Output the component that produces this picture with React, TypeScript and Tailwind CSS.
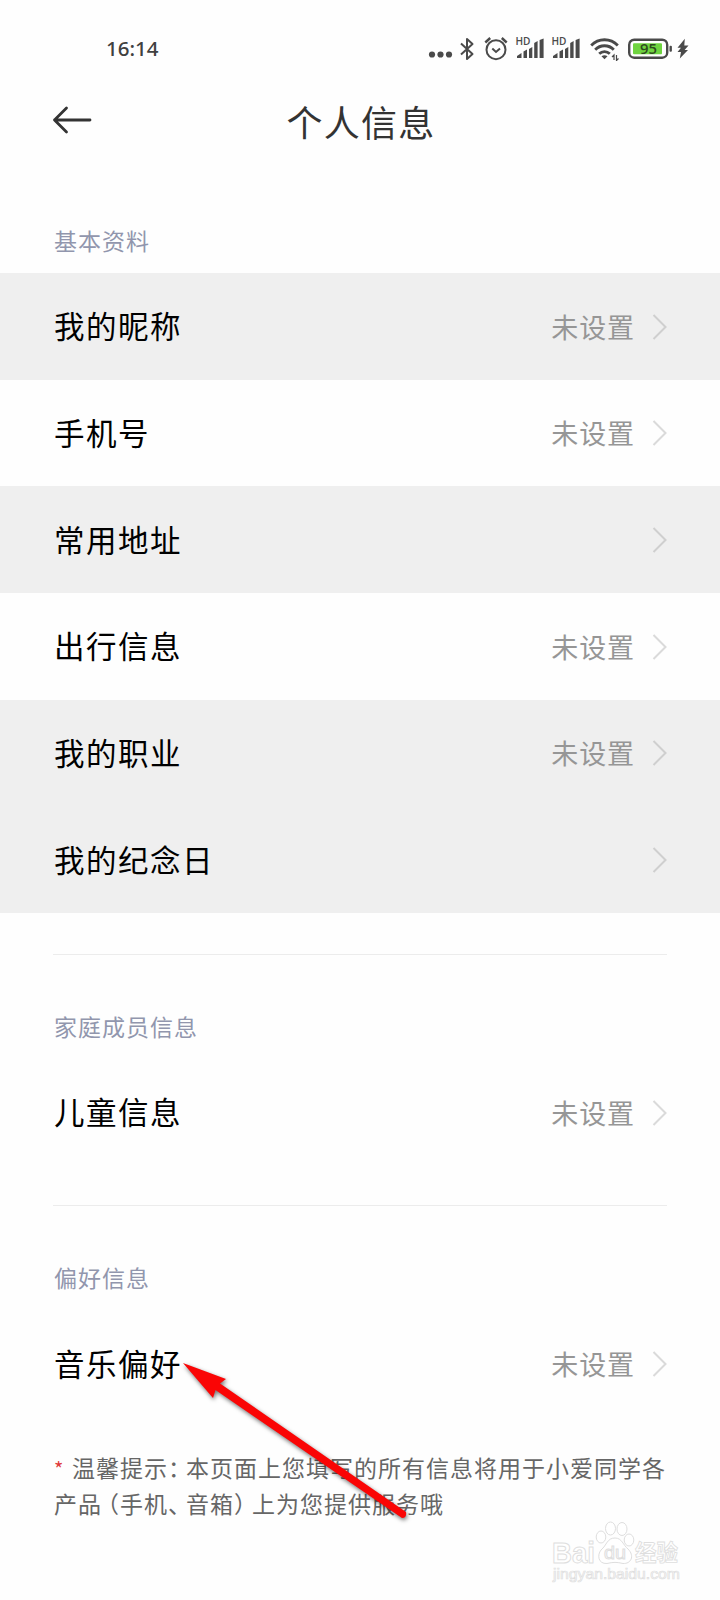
import { ReactNode } from "react";

type RowProps = { label: string; value?: string; shaded?: boolean };

const basicRows: RowProps[] = [
  { label: "我的昵称", value: "未设置", shaded: true },
  { label: "手机号", value: "未设置" },
  { label: "常用地址", shaded: true },
  { label: "出行信息", value: "未设置" },
  { label: "我的职业", value: "未设置", shaded: true },
  { label: "我的纪念日", shaded: true },
];

function Signal() {
  return (
    <svg className="overflow-visible" width="29" height="24" viewBox="0 0 29 24" fill="#4a4a4a">
      <text x="-0.5" y="8.2" fontSize="10.5" fontWeight="600" fontFamily="Open Sans, sans-serif" textLength="15" lengthAdjust="spacingAndGlyphs">
        HD
      </text>
      <path d="M1 21V19L5.500 16V21Z" />
      <path d="M7.500 14.500L11 12.500V21H7.500Z" />
      <path d="M13 12L16.300 10V21H13Z" />
      <path d="M18.200 6L21.600 4V21H18.200Z" />
      <path d="M23.600 3L27.600 1.500V21H23.600Z" />
    </svg>
  );
}

function StatusBar() {
  return (
    <div className="flex h-[97px] items-center pl-[106px] pr-[31px]">
      <span className="-mt-px font-['Noto_Sans','Open_Sans',sans-serif] text-[20.5px] font-medium leading-none text-[#404040]">
        16:14
      </span>
      <div className="ml-auto flex items-center">
        <svg width="25" height="24" viewBox="0 0 25 24" fill="#4a4a4a">
          <circle cx="4" cy="17.500" r="3.100" />
          <circle cx="12.500" cy="17.500" r="3.100" />
          <circle cx="21" cy="17.500" r="3.100" />
        </svg>
        <svg className="ml-[6px]" width="16" height="24" viewBox="0 0 16 24" fill="none" stroke="#4a4a4a" strokeWidth="2">
          <path d="M2 6.500L13.500 17L8 22V2L13.500 7L2 17.500" strokeLinejoin="round" />
        </svg>
        <svg className="ml-[9px]" width="24" height="26" viewBox="0 0 24 26" fill="none" stroke="#4a4a4a" strokeWidth="2">
          <circle cx="12" cy="13.700" r="9.500" />
          <path d="M8.300 12.500L12 16L16 12.500" />
          <path d="M1.300 6.500L6.200 2M22.700 6.500L17.800 2" strokeWidth="2.4" />
        </svg>
        <div className="ml-[8px] mr-px flex gap-[7px]">
          <Signal />
          <Signal />
        </div>
        <svg className="ml-[8px]" width="30" height="24" viewBox="0 0 30 24" fill="none" stroke="#4a4a4a" strokeWidth="2.8">
          <path d="M1.200 8.500C8.500 0.800 20.500 0.800 27.800 8.500" />
          <path d="M5.200 12.700C10.300 7.400 18.700 7.400 23.800 12.700" />
          <path d="M9.200 16.800C12.200 13.800 16.800 13.800 19.800 16.800" />
          <path d="M11.500 19.300Q14.500 17.300 17.500 19.300L14.500 22.300Z" fill="#4a4a4a" stroke="none" />
          <path d="M24 23V18L22 20M26.500 18V23.500L28.500 21.500" strokeWidth="1.2" />
        </svg>
        <svg className="ml-[8px]" width="45" height="22" viewBox="0 0 45 22">
          <rect x="1.200" y="1.700" width="38" height="18" rx="5" fill="#fff" stroke="#4a4a4a" strokeWidth="2.400" />
          <rect x="5" y="5.200" width="29" height="11" rx="1" fill="#6fd440" />
          <rect x="41.500" y="7.700" width="2.400" height="6" rx="1" fill="#4a4a4a" />
          <text x="20.500" y="15.700" textAnchor="middle" fontSize="14" fontWeight="600" fontFamily="Open Sans, sans-serif" fill="#2d4a1e" textLength="17" lengthAdjust="spacingAndGlyphs">
            95
          </text>
        </svg>
        <svg className="ml-[4px]" width="12" height="22" viewBox="0 0 12 22" fill="#4a4a4a">
          <path d="M7.800 0.800L0.500 9.800H4L0.500 14H4L2.800 20.500L11 12H7.600L11.500 7.500H7.300Z" />
        </svg>
      </div>
    </div>
  );
}

function SectionTitle({ children }: { children: ReactNode }) {
  return <h2 className="px-[54px] text-[23px] leading-8 tracking-[1px] text-[#9196ad]">{children}</h2>;
}

function Row({ label, value, shaded }: RowProps) {
  return (
    <div className={`flex h-[106.67px] items-center pl-[54px] pr-[52px] ${shaded ? "bg-[#efefef]" : ""}`}>
      <span className="text-[30.5px] tracking-[1.5px] text-black">{label}</span>
      <span className="ml-auto pt-px text-[27px] tracking-[0.9px] text-[#969696]">{value}</span>
      <svg className="ml-[17px] mt-px" width="16" height="28" viewBox="0 0 16 28" fill="none" stroke={shaded ? "#cfcfcf" : "#dadada"} strokeWidth="2">
        <path d="M1.500 2L13.500 14L1.500 26" />
      </svg>
    </div>
  );
}

// half-width punctuation
function Punct({ children, end }: { children: string; end?: boolean }) {
  return <span className={`inline-flex w-[18px] [font-feature-settings:'halt'] ${end ? "justify-end" : ""}`}>{children}</span>;
}

function PointerArrow() {
  return (
    <svg className="absolute left-[170px] top-[1345px] drop-shadow-[1px_2px_2px_rgba(0,0,0,0.55)]" width="250" height="185" viewBox="0 0 250 185">
      <path d="M13 18L56 34L50 38.500L236 167Q237 173 232 173L45.500 45L43 53Z" fill="#fa0505" />
    </svg>
  );
}

function Watermark() {
  return (
    <svg className="absolute left-[545px] top-[1515px]" width="145" height="75" viewBox="0 0 145 75" fill="#fff" stroke="#dedede" strokeWidth="1" fontFamily="Liberation Sans, Noto Sans CJK SC, sans-serif">
      <text x="7" y="47.500" fontSize="29" fontWeight="700" textLength="43" lengthAdjust="spacingAndGlyphs">
        Bai
      </text>
      <ellipse cx="56" cy="22" rx="4.800" ry="6" />
      <ellipse cx="65.500" cy="13.500" rx="5" ry="6.500" />
      <ellipse cx="77" cy="14" rx="5" ry="6.500" />
      <ellipse cx="84" cy="25" rx="4.800" ry="6" />
      <path d="M70 23C77 23 78 30 83 34C90 41 86 49 78 48.500C72 47 68 47 62 48.500C53 49 52 40 56 35C62 30 62 23 70 23Z" />
      <text x="59" y="44" fontSize="19" textLength="22" lengthAdjust="spacingAndGlyphs">
        du
      </text>
      <text x="90" y="46" fontSize="23" fontWeight="700" strokeWidth="0.9" textLength="43" lengthAdjust="spacingAndGlyphs">
        经验
      </text>
      <text x="8" y="64" fontSize="14" strokeWidth="0.7" textLength="127" lengthAdjust="spacingAndGlyphs">
        jingyan.baidu.com
      </text>
    </svg>
  );
}

export default function App() {
  return (
    <main className="relative h-[1600px] w-[720px] overflow-hidden bg-[#fefefe] font-['Noto_Sans_CJK_SC',sans-serif]">
      <StatusBar />
      <header className="flex h-[53px] items-center px-[52px]">
        <svg className="-mt-[7px]" width="40" height="28" viewBox="0 0 40 28" fill="none" stroke="#333" strokeWidth="2.8" strokeLinecap="round" strokeLinejoin="round">
          <path d="M38 14H2.500M14.500 2L2.500 14L14.500 26" />
        </svg>
        <h1 className="-mt-1.5 mr-[38px] flex-1 text-center text-[36px] leading-none tracking-[1.200px] text-[#333]">个人信息</h1>
      </header>

      <section className="pt-[74px]">
        <SectionTitle>基本资料</SectionTitle>
        <div className="mt-[17px]">
          {basicRows.map((row) => (
            <Row key={row.label} {...row} />
          ))}
        </div>
      </section>

      <section className="pt-[41px]">
        <div className="mx-[53px] mb-[55px] h-px bg-[#ececec]" />
        <SectionTitle>家庭成员信息</SectionTitle>
        <div className="mt-[17px]">
          <Row label="儿童信息" value="未设置" />
        </div>
      </section>

      <section className="pt-[39px]">
        <div className="mx-[53px] mb-[55px] h-px bg-[#ececec]" />
        <SectionTitle>偏好信息</SectionTitle>
        <div className="mt-[17.5px]">
          <Row label="音乐偏好" value="未设置" />
        </div>
      </section>

      <p className="mt-[33.5px] whitespace-nowrap pl-[54px] text-[23px] leading-[34px] tracking-[1px] text-[#666]">
        <span className="inline-block w-[18px] text-[20px] text-[#e03a3a]">*</span>
        温馨提示<Punct>：</Punct>本页面上您填写的所有信息将用于小爱同学各
        <br />
        产品<Punct end>（</Punct>手机<Punct>、</Punct>音箱<Punct>）</Punct>上为您提供服务哦
      </p>

      <PointerArrow />
      <Watermark />
    </main>
  );
}
